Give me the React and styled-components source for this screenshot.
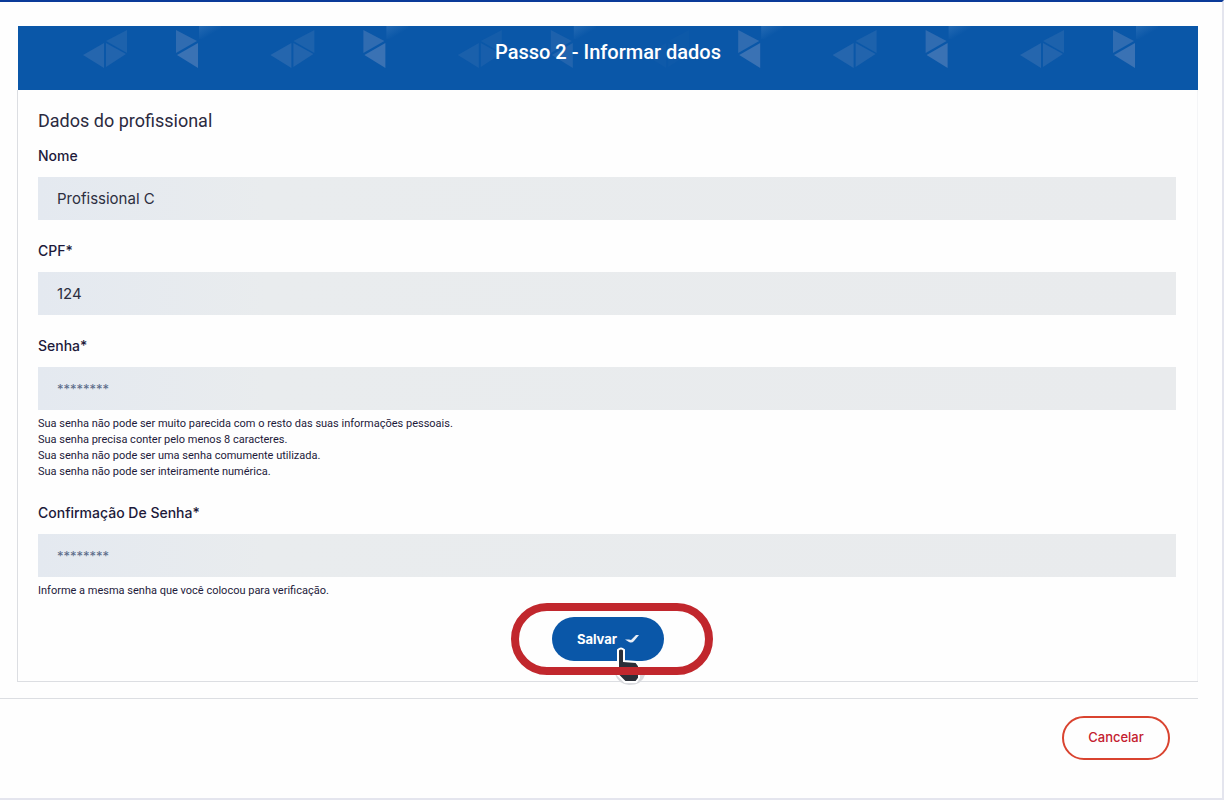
import React from 'react';
import styled, { createGlobalStyle } from 'styled-components';

const GlobalStyle = createGlobalStyle`
  *, *::before, *::after { box-sizing: border-box; }
  body {
    margin: 0;
    background: #fefefe;
    color: #1d1a3a;
    font-family: Inter, 'Liberation Sans', sans-serif;
    font-size: 14px;
  }
`;

const Page = styled.main`
  min-height: 100vh;
  padding-top: 24px;
  border-top: 2px solid #0a3a99;
  border-right: 2px solid #e4e5ee;
  border-bottom: 2px solid #e4e5ee;
`;

const Card = styled.section`
  margin: 0 24px 0 17px;
  border-bottom: 1px solid #dcdee2;
`;

const Banner = styled.header`
  position: relative;
  height: 64px;
  margin-left: 1px;
  padding-top: 14px;
  overflow: hidden;
  background: #0a57a8;
`;

const BannerArt = styled.svg`
  position: absolute;
  inset: 0;
  width: 100%;
  height: 100%;
`;

const BannerTitle = styled.h1`
  position: relative;
  margin: 0;
  color: #fff;
  font: 500 20px/24px Roboto, sans-serif;
  text-align: center;
`;

const Form = styled.form`
  padding: 21px 21px 6px 20px;
  border-left: 1px solid #dcdee2;
  border-right: 1px solid #f4f5f7;
`;

const SectionTitle = styled.h2`
  margin: 0 0 15px;
  color: #2b2a40;
  font: 400 18px/20px Roboto, sans-serif;
`;

const Field = styled.div`
  margin-bottom: ${(p) => p.$gap || 21}px;
`;

const Label = styled.label`
  display: block;
  margin-bottom: 11px;
  font-weight: 500;
  line-height: 20px;
`;

const Input = styled.input`
  display: block;
  width: 100%;
  height: 43px;
  padding: 0 19px;
  border: 0;
  border-radius: 0;
  background: linear-gradient(90deg, #e4e9f0, #e9ecee 20%, #e9ebed);
  color: #2d2f40;
  font: inherit;
  font-size: 15px;
  &::placeholder { color: #5b6b88; font-size: 13px; opacity: 1; }
`;

const HelpList = styled.div`
  padding-top: 6px;
  font: 400 11px/16px Roboto, sans-serif;
  p { margin: 0; }
`;

const Actions = styled.div`
  display: flex;
  justify-content: center;
  padding-left: 10px;
`;

const Highlight = styled.div`
  position: relative;
  padding: 6px 41px 6px 33px;
  border: 8px solid #c1272d;
  border-radius: 36px;
`;

const SaveButton = styled.button`
  display: flex;
  align-items: center;
  justify-content: center;
  gap: 8px;
  width: 112px;
  height: 44px;
  padding: 0;
  border: 0;
  border-radius: 22px;
  background: #0a57a8;
  color: #fff;
  font: 700 13px/20px Inter, sans-serif;
`;

const Pointer = styled.svg`
  position: absolute;
  left: 95px;
  top: 36px;
`;

const Footer = styled.footer`
  display: flex;
  justify-content: flex-end;
  margin: 16px 24px 0 0;
  padding: 17px 28px 0 0;
  border-top: 1px solid #dcdee2;
`;

const CancelButton = styled.button`
  width: 108px;
  height: 44px;
  padding: 0 0 2px;
  border: 2px solid #d9432f;
  border-radius: 22px;
  background: transparent;
  color: #c4202f;
  font: 500 13px/20px Inter, sans-serif;
`;

const TILES = [
  { left: 1, right: 1 },
  { left: 1, right: 1 },
  { left: 0.6, right: 0.5 },
  { left: 0.2, right: 1 },
  { left: 1, right: 1 },
  { left: 1, right: 1 },
  { left: 1, right: 1 },
];

function Tiles() {
  return (
    <BannerArt aria-hidden="true">
      <defs>
        <linearGradient id="glow" x1="0" y1="0" x2="1" y2="1">
          <stop offset="0" stopColor="#4b86c4" stopOpacity=".4" />
          <stop offset=".6" stopColor="#4b86c4" stopOpacity="0" />
        </linearGradient>
      </defs>
      {TILES.map((tile, i) => (
        <g key={i} transform={`translate(${i * 187.4} 0)`}>
          <g opacity={tile.left}>
            <path d="M65 29 86 17V42Z" fill="#2566ae" />
            <path d="M88 17 108 28 88 41Z" fill="#2264ad" />
            <path d="M88 15 109 4V27Z" fill="#1d62ac" />
          </g>
          <g opacity={tile.right}>
            <path d="M158 4 179 15 158 27Z" fill="#306cb1" />
            <path d="M159 29 180 17V42Z" fill="#3a72b4" />
          </g>
          <path d="M181 0H203V13H181Z" fill="url(#glow)" />
        </g>
      ))}
    </BannerArt>
  );
}

export default function App() {
  return (
    <>
      <GlobalStyle />
      <Page>
        <Card>
          <Banner>
            <Tiles />
            <BannerTitle>Passo 2 - Informar dados</BannerTitle>
          </Banner>
          <Form onSubmit={(e) => e.preventDefault()}>
            <SectionTitle>Dados do profissional</SectionTitle>
            <Field>
              <Label htmlFor="nome">Nome</Label>
              <Input id="nome" defaultValue="Profissional C" />
            </Field>
            <Field>
              <Label htmlFor="cpf">CPF*</Label>
              <Input id="cpf" defaultValue="124" />
            </Field>
            <Field $gap={23}>
              <Label htmlFor="senha">Senha*</Label>
              <Input id="senha" type="password" placeholder="********" />
              <HelpList>
                <p>Sua senha não pode ser muito parecida com o resto das suas informações pessoais.</p>
                <p>Sua senha precisa conter pelo menos 8 caracteres.</p>
                <p>Sua senha não pode ser uma senha comumente utilizada.</p>
                <p>Sua senha não pode ser inteiramente numérica.</p>
              </HelpList>
            </Field>
            <Field $gap={4}>
              <Label htmlFor="confirmacao">Confirmação De Senha*</Label>
              <Input id="confirmacao" type="password" placeholder="********" />
              <HelpList>
                <p>Informe a mesma senha que você colocou para verificação.</p>
              </HelpList>
            </Field>
            <Actions>
              <Highlight>
                <SaveButton type="submit">
                  Salvar
                  <svg width="14" height="10" viewBox="0 0 14 10" aria-hidden="true">
                    <path d="M0 5.500H4L6 6 11 1H14L9 7Q7 9.500 4 8Z" fill="#e8eef7" />
                  </svg>
                </SaveButton>
                <Pointer width="34" height="40" viewBox="0 0 34 40" aria-hidden="true">
                  <path d="M1 27Q4 37 15 38Q28 38 31 28Z" fill="#d9dade" />
                  <path d="M4 3Q7 0 10 3V14L22 15 25 19V31L22 35H11L4 28Z" fill="#2b2f38" stroke="#fff" strokeWidth="2" />
                  <path d="M0 20H34V28H0Z" fill="#c1272d" />
                </Pointer>
              </Highlight>
            </Actions>
          </Form>
        </Card>
        <Footer>
          <CancelButton type="button">Cancelar</CancelButton>
        </Footer>
      </Page>
    </>
  );
}
